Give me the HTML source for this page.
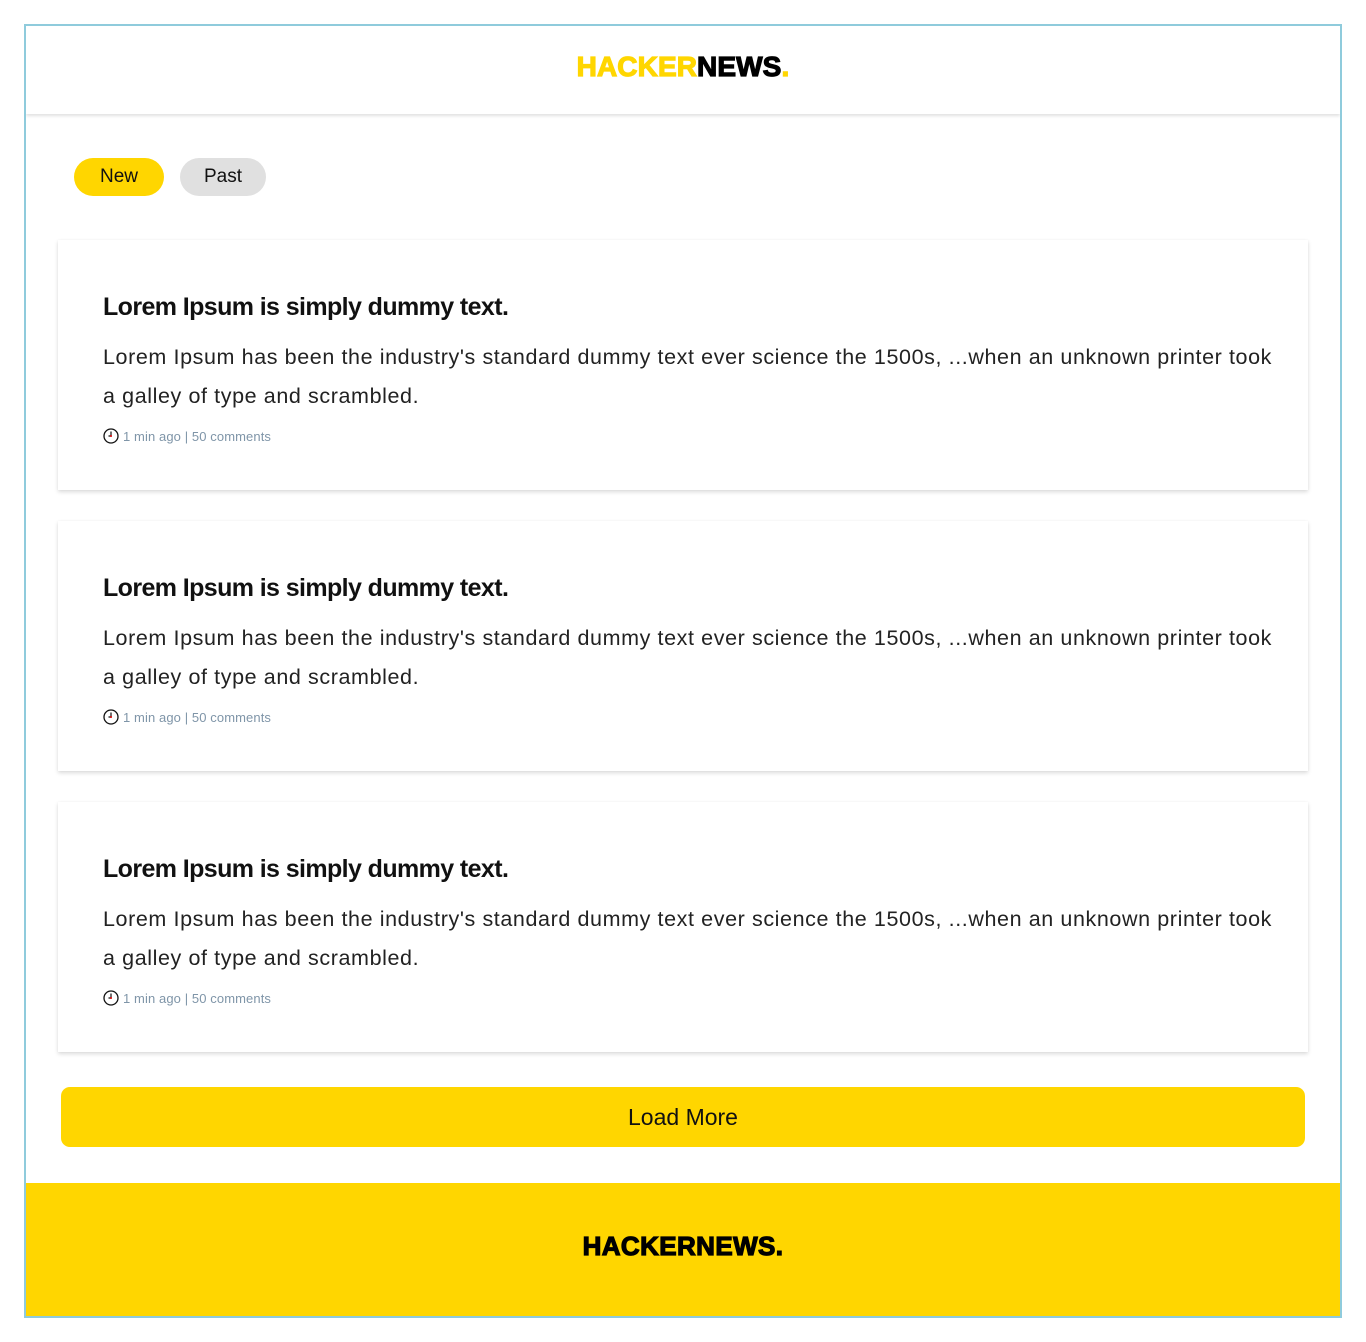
<!DOCTYPE html>
<html><head><meta charset="utf-8"><style>
*{margin:0;padding:0;box-sizing:border-box}
body{width:1366px;height:1342px;background:#fff;font-family:"Liberation Sans",sans-serif;position:relative}
.frame{position:absolute;left:24px;top:24px;width:1318px;height:1294px;border:2px solid #8fcbdc;overflow:hidden}
.hdr{position:absolute;left:0;top:0;width:100%;height:88px;background:#fff;box-shadow:0 2px 3px rgba(0,0,0,.12);text-align:center}
.logo{font-weight:900;font-size:28px;letter-spacing:0.1px;display:inline-block;-webkit-text-stroke:1.2px currentColor}
.hdr .logo{margin-top:25px}
.y{color:#ffd600}.k{color:#000}
.pill{position:absolute;top:132px;height:38px;border-radius:19px;font-size:19px;line-height:38px;text-align:center;color:#111}
.card{position:absolute;left:32px;width:1250px;height:250px;background:#fff;box-shadow:0 2px 4px rgba(0,0,0,.14),0 0 2px rgba(0,0,0,.04)}
.card h2{position:absolute;left:45px;top:53px;font-size:25px;font-weight:bold;letter-spacing:-0.6px;color:#111}
.card p{position:absolute;left:45px;top:98px;font-size:21.5px;line-height:39px;color:#222;white-space:nowrap;letter-spacing:0.6px}
.meta{position:absolute;left:45px;top:188px;font-size:13px;color:#7f95a8;display:flex;align-items:center;gap:4px;letter-spacing:0.1px}
.load{position:absolute;left:35px;top:1061px;width:1244px;height:60px;background:#ffd600;border-radius:9px;text-align:center;line-height:60px;font-size:23px;color:#111}
.foot{position:absolute;left:0;top:1157px;width:100%;height:140px;background:#ffd600;text-align:center}
.foot .logo{margin-top:48px;font-size:26px;letter-spacing:0.4px}
</style></head><body><div class="frame">
<div class="hdr"><span class="logo"><span class="y">HACKER</span><span class="k">NEWS</span><span class="y">.</span></span></div>
<div class="pill" style="left:48px;width:90px;background:#ffd600">New</div>
<div class="pill" style="left:154px;width:86px;background:#e0e0e0">Past</div>
<div class="card" style="top:214px"><h2>Lorem Ipsum is simply dummy text.</h2><p>Lorem Ipsum has been the industry's standard dummy text ever science the 1500s, ...when an unknown printer took<br>a galley of type and scrambled.</p><div class="meta"><svg width="16" height="16" viewBox="0 0 16 16"><circle cx="8" cy="8" r="7" fill="#fff" stroke="#111" stroke-width="1.3"/><path d="M8 3.5V8H5.5" stroke="#111" stroke-width="1.2" fill="none"/><circle cx="8" cy="8" r="1" fill="#d00"/></svg>1 min ago | 50 comments</div></div>
<div class="card" style="top:495px"><h2>Lorem Ipsum is simply dummy text.</h2><p>Lorem Ipsum has been the industry's standard dummy text ever science the 1500s, ...when an unknown printer took<br>a galley of type and scrambled.</p><div class="meta"><svg width="16" height="16" viewBox="0 0 16 16"><circle cx="8" cy="8" r="7" fill="#fff" stroke="#111" stroke-width="1.3"/><path d="M8 3.5V8H5.5" stroke="#111" stroke-width="1.2" fill="none"/><circle cx="8" cy="8" r="1" fill="#d00"/></svg>1 min ago | 50 comments</div></div>
<div class="card" style="top:776px"><h2>Lorem Ipsum is simply dummy text.</h2><p>Lorem Ipsum has been the industry's standard dummy text ever science the 1500s, ...when an unknown printer took<br>a galley of type and scrambled.</p><div class="meta"><svg width="16" height="16" viewBox="0 0 16 16"><circle cx="8" cy="8" r="7" fill="#fff" stroke="#111" stroke-width="1.3"/><path d="M8 3.5V8H5.5" stroke="#111" stroke-width="1.2" fill="none"/><circle cx="8" cy="8" r="1" fill="#d00"/></svg>1 min ago | 50 comments</div></div>
<div class="load">Load More</div>
<div class="foot"><span class="logo k">HACKERNEWS.</span></div>
</div></body></html>
